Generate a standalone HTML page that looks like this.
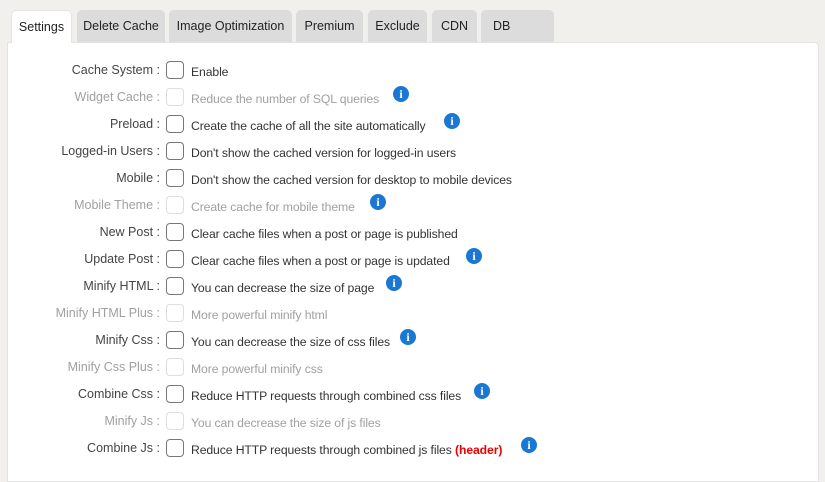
<!DOCTYPE html>
<html><head><style>
body{margin:0;width:825px;height:472px;background:#f1f0ec;font-family:"Liberation Sans",sans-serif;font-size:12.5px;color:#333;position:relative;overflow:hidden}
.tab{position:absolute;top:10px;height:32px;background:#dcdcdc;border-radius:5px 5px 0 0;line-height:33px;text-align:center;color:#222;font-size:12.5px}
.tab.a{background:#fff;height:33px;border:1px solid #e3e3e3;border-bottom:none;box-sizing:border-box}
.panel{position:absolute;left:7px;top:42px;width:812px;height:440px;background:#fff;border:1px solid #e3e3e3;border-radius:0 4px 0 0;box-sizing:border-box}
.row{position:absolute;left:0;height:20px;width:825px}
.lab{position:absolute;right:665px;top:0;white-space:nowrap;text-align:right;color:#444}
.cb{position:absolute;left:166px;top:-2px;width:16px;height:16px;border:1px solid #777;border-radius:4px;background:#fff}
.txt{position:absolute;left:191px;top:2px;white-space:nowrap;font-size:12.2px;letter-spacing:-0.1px}
.dis .lab,.dis .txt{color:#a0a0a0}.dis .cb{border-color:#ddd}
.i{position:absolute;width:16px;height:16px;border-radius:50%;background:#1a78d4;color:#fff;font:bold 12px "Liberation Serif",serif;text-align:center;line-height:16px}
.red{color:#e00;font-weight:bold}
</style></head><body>
<div class="panel"></div>
<div class="tab a" style="left:11px;width:61px">Settings</div>
<div class="tab" style="left:77px;width:88px">Delete Cache</div>
<div class="tab" style="left:169px;width:123px">Image Optimization</div>
<div class="tab" style="left:296px;width:67px">Premium</div>
<div class="tab" style="left:368px;width:59px">Exclude</div>
<div class="tab" style="left:432px;width:45px">CDN</div>
<div class="tab" style="left:481px;width:73px;text-align:left;padding-left:12px;box-sizing:border-box">DB</div>

<div class="row" style="top:63px"><span class="lab">Cache System :</span><span class="cb"></span><span class="txt">Enable</span></div>
<div class="row dis" style="top:90px"><span class="lab">Widget Cache :</span><span class="cb"></span><span class="txt">Reduce the number of SQL queries</span></div>
<div class="row" style="top:117px"><span class="lab">Preload :</span><span class="cb"></span><span class="txt">Create the cache of all the site automatically</span></div>
<div class="row" style="top:144px"><span class="lab">Logged-in Users :</span><span class="cb"></span><span class="txt">Don't show the cached version for logged-in users</span></div>
<div class="row" style="top:171px"><span class="lab">Mobile :</span><span class="cb"></span><span class="txt">Don't show the cached version for desktop to mobile devices</span></div>
<div class="row dis" style="top:198px"><span class="lab">Mobile Theme :</span><span class="cb"></span><span class="txt">Create cache for mobile theme</span></div>
<div class="row" style="top:225px"><span class="lab">New Post :</span><span class="cb"></span><span class="txt">Clear cache files when a post or page is published</span></div>
<div class="row" style="top:252px"><span class="lab">Update Post :</span><span class="cb"></span><span class="txt">Clear cache files when a post or page is updated</span></div>
<div class="row" style="top:279px"><span class="lab">Minify HTML :</span><span class="cb"></span><span class="txt">You can decrease the size of page</span></div>
<div class="row dis" style="top:306px"><span class="lab">Minify HTML Plus :</span><span class="cb"></span><span class="txt">More powerful minify html</span></div>
<div class="row" style="top:333px"><span class="lab">Minify Css :</span><span class="cb"></span><span class="txt">You can decrease the size of css files</span></div>
<div class="row dis" style="top:360px"><span class="lab">Minify Css Plus :</span><span class="cb"></span><span class="txt">More powerful minify css</span></div>
<div class="row" style="top:387px"><span class="lab">Combine Css :</span><span class="cb"></span><span class="txt">Reduce HTTP requests through combined css files</span></div>
<div class="row dis" style="top:414px"><span class="lab">Minify Js :</span><span class="cb"></span><span class="txt">You can decrease the size of js files</span></div>
<div class="row" style="top:441px"><span class="lab">Combine Js :</span><span class="cb"></span><span class="txt">Reduce HTTP requests through combined js files <span class="red">(header)</span></span></div>

<div class="i" style="left:393px;top:86px">i</div>
<div class="i" style="left:444px;top:113px">i</div>
<div class="i" style="left:370px;top:194px">i</div>
<div class="i" style="left:466px;top:248px">i</div>
<div class="i" style="left:386px;top:275px">i</div>
<div class="i" style="left:400px;top:329px">i</div>
<div class="i" style="left:474px;top:383px">i</div>
<div class="i" style="left:521px;top:437px">i</div>
</body></html>
